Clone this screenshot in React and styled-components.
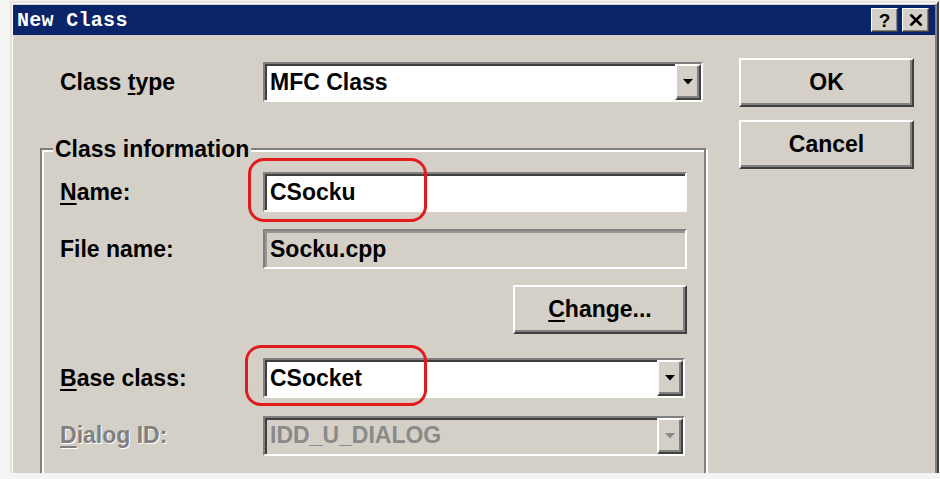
import React from 'react';
import styled, { createGlobalStyle } from 'styled-components';

const Global = createGlobalStyle`
  html, body { margin: 0; padding: 0; background: #f4f4f4; }
  body { font-family: "Liberation Sans", Arial, sans-serif; }
`;

const Win = styled.div`
  margin: 1px 0 0 10px;
  width: 929px;
  height: 472px;
  box-sizing: border-box;
  background: #d4d0c8;
  border-top: 2px solid #e6e3dc;
  border-left: 2px solid #e6e3dc;
  border-right: 2px solid #404040;
  box-shadow: inset 1px 1px 0 #fff, inset -2px 0 0 #808080;
  padding: 2px 2px 0 1px;
  overflow: hidden;
  display: flex;
  flex-direction: column;
`;

const TitleBar = styled.div`
  height: 30px;
  flex: none;
  background: #0a246a;
  display: flex;
  align-items: center;
  justify-content: space-between;
  padding: 0 6px 0 4px;
`;

const TitleText = styled.span`
  color: #fff;
  font-family: "Liberation Mono", "Courier New", monospace;
  font-weight: bold;
  font-size: 20px;
  letter-spacing: 0.3px;
`;

const TitleButtons = styled.div`
  display: flex;
  gap: 4px;
`;

const TitleBtn = styled.div`
  width: 27px;
  height: 24px;
  box-sizing: border-box;
  background: #d4d0c8;
  border: 1px solid;
  border-color: #fff #404040 #404040 #fff;
  box-shadow: inset -1px -1px 0 #808080;
  display: flex;
  align-items: center;
  justify-content: center;
  font-weight: bold;
  font-size: 19px;
  color: #000;
  line-height: 1;
`;

const Body = styled.div`
  display: flex;
  flex: 1;
`;

const LeftCol = styled.div`
  width: 694px;
  padding-left: 27px;
  box-sizing: border-box;
`;

const RightCol = styled.div`
  padding: 23px 0 0 32px;
  display: flex;
  flex-direction: column;
  gap: 13px;
`;

const TypeRow = styled.div`
  margin-top: 27px;
  padding-left: 20px;
  height: 40px;
  display: flex;
  align-items: center;
`;

const Label = styled.div`
  width: 203px;
  flex: none;
  font-size: 23px;
  font-weight: bold;
  color: ${p => (p.$disabled ? '#808080' : '#000')};
  text-shadow: ${p => (p.$disabled ? '1px 1px 0 #fff' : 'none')};
  white-space: nowrap;
  u {
    text-decoration-thickness: 2px;
    text-underline-offset: 3px;
  }
`;

const Group = styled.div`
  margin-top: 46px;
  width: 666px;
  box-sizing: border-box;
  border: 2px solid #808080;
  box-shadow: inset 2px 2px 0 #fff, 2px 2px 0 #fff;
  padding: 0 0 60px 18px;
`;

const Legend = styled.div`
  width: fit-content;
  margin: -14px 0 0 -7px;
  padding: 0 2px;
  background: #d4d0c8;
  line-height: 26px;
  font-size: 23px;
  font-weight: bold;
  color: #000;
`;

const Row = styled.div`
  display: flex;
  align-items: center;
  margin-top: ${p => p.$gap}px;
  height: ${p => p.$h || 40}px;
  width: 627px;
  justify-content: ${p => (p.$end ? 'flex-end' : 'flex-start')};
`;

const Field = styled.div`
  position: relative;
  width: ${p => p.$w}px;
  height: ${p => p.$h || 40}px;
  box-sizing: border-box;
  border: 2px solid;
  border-color: #808080 #fff #fff #808080;
  box-shadow: inset 2px 2px 0 ${p => (p.$soft ? '#9a978f' : '#404040')};
  background: ${p => (p.$gray ? '#d4d0c8' : '#fff')};
  display: flex;
  align-items: center;
  padding-left: 5px;
  font-size: 23px;
  font-weight: bold;
  color: ${p => (p.$disabled ? '#8a8a8a' : '#000')};
`;

const FieldText = styled.span`
  flex: 1;
  white-space: nowrap;
`;

const DropBtn = styled.div`
  width: 26px;
  height: 100%;
  flex: none;
  box-sizing: border-box;
  background: #d4d0c8;
  border: 2px solid;
  border-color: #fff #404040 #404040 #fff;
  box-shadow: inset -2px -2px 0 #808080;
  display: flex;
  align-items: center;
  justify-content: center;
`;

const Button = styled.div`
  width: ${p => p.$w || 175}px;
  height: 49px;
  box-sizing: border-box;
  background: #d4d0c8;
  border: 2px solid;
  border-color: #fff #404040 #404040 #fff;
  box-shadow: inset -2px -2px 0 #808080;
  display: flex;
  align-items: center;
  justify-content: center;
  font-size: 23px;
  font-weight: bold;
  color: #000;
  u {
    text-decoration-thickness: 2px;
    text-underline-offset: 3px;
  }
`;

const RedMark = styled.div`
  position: absolute;
  left: ${p => p.$x}px;
  top: ${p => p.$y}px;
  width: ${p => p.$w}px;
  height: ${p => p.$h}px;
  box-sizing: border-box;
  border: 3px solid #e21c1c;
  border-radius: 16px;
  pointer-events: none;
  z-index: 2;
`;

const Arrow = ({ color = '#000' }) => (
  <svg width="10" height="6" viewBox="0 0 10 6">
    <polygon points="0,0 10,0 5,5.5" fill={color} />
  </svg>
);

const Combo = ({ w, text, disabled, children }) => (
  <Field $w={w} $gray={disabled} $disabled={disabled}>
    <FieldText>{text}</FieldText>
    <DropBtn>
      <Arrow color={disabled ? '#8a8a8a' : '#000'} />
    </DropBtn>
    {children}
  </Field>
);

export default function App() {
  return (
    <>
      <Global />
      <Win>
        <TitleBar>
          <TitleText>New Class</TitleText>
          <TitleButtons>
            <TitleBtn>?</TitleBtn>
            <TitleBtn>
              <svg width="14" height="12" viewBox="0 0 14 12">
                <path d="M1.5 0.5 L12.5 11.5 M12.5 0.5 L1.5 11.5" stroke="#000" strokeWidth="2.6" />
              </svg>
            </TitleBtn>
          </TitleButtons>
        </TitleBar>
        <Body>
          <LeftCol>
            <TypeRow>
              <Label>Class <u>t</u>ype</Label>
              <Combo w={440} text="MFC Class" />
            </TypeRow>
            <Group>
              <Legend>Class information</Legend>
              <Row $gap={10}>
                <Label><u>N</u>ame:</Label>
                <Field $w={424}>
                  <FieldText>CSocku</FieldText>
                  <RedMark $x={-17} $y={-16} $w={179} $h={64} />
                </Field>
              </Row>
              <Row $gap={17}>
                <Label>File name:</Label>
                <Field $w={424} $gray $soft>
                  <FieldText>Socku.cpp</FieldText>
                </Field>
              </Row>
              <Row $gap={16} $h={48} $end>
                <Button $w={174}><span><u>C</u>hange...</span></Button>
              </Row>
              <Row $gap={25}>
                <Label><u>B</u>ase class:</Label>
                <Combo w={422} text="CSocket">
                  <RedMark $x={-20} $y={-15} $w={182} $h={61} />
                </Combo>
              </Row>
              <Row $gap={17} $h={41}>
                <Label $disabled><u>D</u>ialog ID:</Label>
                <Combo w={422} text="IDD_U_DIALOG" disabled />
              </Row>
            </Group>
          </LeftCol>
          <RightCol>
            <Button>OK</Button>
            <Button>Cancel</Button>
          </RightCol>
        </Body>
      </Win>
    </>
  );
}
